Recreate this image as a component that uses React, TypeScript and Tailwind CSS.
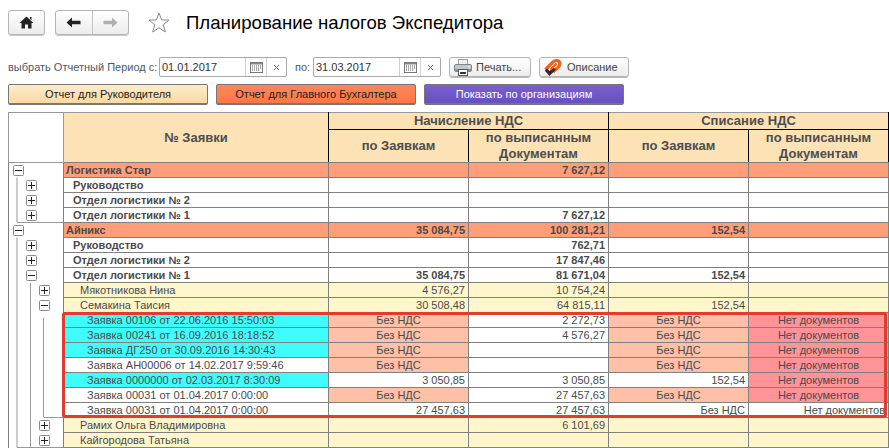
import React from "react";

const Home = () => (
  <svg width="15" height="13" viewBox="0 0 15 13"><path d="M7.5 0.5 L14.5 7 L12.5 7 L12.5 12.5 L9 12.5 L9 8.5 L6 8.5 L6 12.5 L2.5 12.5 L2.5 7 L0.5 7 Z M11 1 h1.5 v3 L11 3 Z" fill="#222" /></svg>
);
const Arrow = ({ dir, color }: { dir: "l" | "r"; color: string }) => (
  <svg width="15" height="11" viewBox="0 0 15 11"><path d={dir === "l" ? "M0.5 5.5 L6 0.5 V3.8 H14.5 V7.2 H6 V10.5 Z" : "M14.5 5.5 L9 0.5 V3.8 H0.5 V7.2 H9 V10.5 Z"} fill={color} /></svg>
);
const Star = () => (
  <svg width="22" height="21" viewBox="0 0 22 21"><path d="M11 1 L13.6 7.9 L21 8.1 L15.2 12.7 L17.3 20 L11 15.8 L4.7 20 L6.8 12.7 L1 8.1 L8.4 7.9 Z" fill="#fff" stroke="#8c8c8c" strokeWidth="1" /></svg>
);
const Cal = () => (
  <svg width="13" height="11" viewBox="0 0 13 11"><rect x="0.5" y="0.5" width="12" height="10" fill="#fff" stroke="#777" /><rect x="1" y="1" width="11" height="1.5" fill="#888" /><path d="M2 4h1M4 4h1M6 4h1M8 4h1M10 4h1M2 6h1M4 6h1M6 6h1M8 6h1M10 6h1M2 8h1M4 8h1M6 8h1M8 8h1" stroke="#555" strokeWidth="1" /></svg>
);
const Cross = () => (
  <svg width="7" height="7" viewBox="0 0 7 7"><path d="M1 1 L6 6 M6 1 L1 6" stroke="#666" strokeWidth="1" /></svg>
);
const Printer = () => (
  <svg width="18" height="17" viewBox="0 0 18 17"><rect x="4.5" y="0.5" width="9" height="6" fill="#eef1f3" stroke="#9aa0a5" /><rect x="0.5" y="5.5" width="17" height="7" rx="1.5" fill="#c3c8cc" stroke="#7f8589" /><rect x="1" y="10" width="16" height="2" fill="#8d9296" /><rect x="4.5" y="10.5" width="9" height="6" fill="#fff" stroke="#55595c" /><rect x="6" y="13" width="6" height="2" fill="#333" /><rect x="14" y="7" width="2" height="1.5" fill="#eee" /></svg>
);
const Clip = () => (
  <svg width="18" height="17" viewBox="0 0 18 17"><path d="M1.5 10.5 L8.5 3.5 C10.5 1.5 13.5 1 15 2.5 C16.7 4.2 15.8 6.5 14 8.3 L9 13" fill="none" stroke="#e8641f" strokeWidth="3.2" /><path d="M2 10.5 L5.5 14.5 L10.5 9.5" fill="none" stroke="#2a2a2a" strokeWidth="3.4" /><path d="M12.5 4.5 L6.5 10.5" stroke="#e8641f" strokeWidth="2.4" /></svg>
);
const TreeBox = ({ open, level }: { open: boolean; level: number }) => {
  const pad = level === 0 ? "pl-[4px]" : level === 1 ? "pl-[17px]" : "pl-[30px]";
  return (
    <div className={`flex items-center ${pad}`}>
      <svg width="11" height="11" viewBox="0 0 11 11" className="relative">
        <rect x="0.5" y="0.5" width="10" height="10" rx="1" fill="#fff" stroke="#8a8a8a" />
        <path d={open ? "M2 5.5h7" : "M2 5.5h7M5.5 2v7"} stroke="#222" strokeWidth="1" />
      </svg>
    </div>
  );
};

type Row = {
  level: number;
  open: boolean;
  label: string;
  cols: [string, string, string, string];
  kind: "org" | "dept" | "person" | "doc";
  nameBg?: string;
  bg?: [string, string, string, string];
  align?: [string, string, string, string];
};

const S = "bg-[#ffc0a8]";
const P = "bg-[#ff9397]";
const W = "bg-white";
const C = "bg-[#3ffdff]";
const bez = "Без НДС";
const net = "Нет документов";
const docAlign: [string, string, string, string] = ["text-center", "text-right", "text-center", "text-center"];

const rows: Row[] = [
  { level: 0, open: true, label: "Логистика Стар", cols: ["", "7 627,12", "", ""], kind: "org" },
  { level: 1, open: false, label: "Руководство", cols: ["", "", "", ""], kind: "dept" },
  { level: 1, open: false, label: "Отдел логистики № 2", cols: ["", "", "", ""], kind: "dept" },
  { level: 1, open: false, label: "Отдел логистики № 1", cols: ["", "7 627,12", "", ""], kind: "dept" },
  { level: 0, open: true, label: "Айникс", cols: ["35 084,75", "100 281,21", "152,54", ""], kind: "org" },
  { level: 1, open: false, label: "Руководство", cols: ["", "762,71", "", ""], kind: "dept" },
  { level: 1, open: false, label: "Отдел логистики № 2", cols: ["", "17 847,46", "", ""], kind: "dept" },
  { level: 1, open: true, label: "Отдел логистики № 1", cols: ["35 084,75", "81 671,04", "152,54", ""], kind: "dept" },
  { level: 2, open: false, label: "Мякотникова Нина", cols: ["4 576,27", "10 754,24", "", ""], kind: "person" },
  { level: 2, open: true, label: "Семакина Таисия", cols: ["30 508,48", "64 815,11", "152,54", ""], kind: "person" },
  { level: 3, open: false, label: "Заявка 00106 от 22.06.2016 15:50:03", cols: [bez, "2 272,73", bez, net], kind: "doc", nameBg: C, bg: [S, W, S, P], align: docAlign },
  { level: 3, open: false, label: "Заявка 00241 от 16.09.2016 18:18:52", cols: [bez, "4 576,27", bez, net], kind: "doc", nameBg: C, bg: [S, W, S, P], align: docAlign },
  { level: 3, open: false, label: "Заявка ДГ250 от 30.09.2016 14:30:43", cols: [bez, "", bez, net], kind: "doc", nameBg: C, bg: [S, W, S, P], align: docAlign },
  { level: 3, open: false, label: "Заявка АН00006 от 14.02.2017 9:59:46", cols: [bez, "", bez, net], kind: "doc", nameBg: W, bg: [S, W, S, P], align: docAlign },
  { level: 3, open: false, label: "Заявка 0000000 от 02.03.2017 8:30:09", cols: ["3 050,85", "3 050,85", "152,54", net], kind: "doc", nameBg: C, bg: [W, W, W, P], align: ["text-right", "text-right", "text-right", "text-center"] },
  { level: 3, open: false, label: "Заявка 00031 от 01.04.2017 0:00:00", cols: [bez, "27 457,63", bez, net], kind: "doc", nameBg: W, bg: [S, W, S, P], align: docAlign },
  { level: 3, open: false, label: "Заявка 00031 от 01.04.2017 0:00:00", cols: ["27 457,63", "27 457,63", bez, net], kind: "doc", nameBg: W, bg: [W, W, W, W], align: ["text-right", "text-right", "text-right", "text-right"] },
  { level: 2, open: false, label: "Рамих Ольга Владимировна", cols: ["", "6 101,69", "", ""], kind: "person" },
  { level: 2, open: false, label: "Кайгородова Татьяна", cols: ["", "", "", ""], kind: "person" },
];

const rowBg = { org: "bg-[#ff9e78]", dept: "bg-white", person: "bg-[#fff6cc]", doc: "bg-white" };
const nameCls = {
  org: "pl-[2px] font-bold",
  dept: "pl-[9px] font-bold",
  person: "pl-[16px]",
  doc: "pl-[23px]",
};

const Th = "bg-[#fde2b5] border border-black text-[#4d4d4d] font-bold text-[13px] leading-[16px] text-center align-middle p-0";

export default function App() {
  return (
    <div className="relative w-[889px] h-[448px] overflow-hidden bg-white font-['Liberation_Sans',Arial,sans-serif]">
      <div className="flex items-center pl-[8px] pt-[10px] h-[35px]">
        <div className="flex items-center justify-center w-[37px] h-[25px] rounded-[3px] border border-[#b4b4b4] bg-gradient-to-b from-white to-[#ececec] shadow-[0_1px_0_#ccc]">
          <Home />
        </div>
        <div className="flex ml-[10px] w-[74px] h-[25px] rounded-[3px] border border-[#b4b4b4] bg-gradient-to-b from-white to-[#ececec] shadow-[0_1px_0_#ccc]">
          <div className="flex-1 flex items-center justify-center border-r border-[#c4c4c4]"><Arrow dir="l" color="#222" /></div>
          <div className="flex-1 flex items-center justify-center"><Arrow dir="r" color="#b0b0b0" /></div>
        </div>
        <div className="ml-[19px] flex"><Star /></div>
        <div className="ml-[16px] text-[18.6px] leading-[24px] text-black whitespace-nowrap">Планирование налогов Экспедитора</div>
      </div>
      <div className="flex items-center pl-[8px] mt-[22px] h-[20px] text-[11px] text-[#4c5a66]">
        <span className="whitespace-nowrap w-[151px]">выбрать Отчетный Период с:</span>
        <div className="flex items-center w-[128px] h-[20px] rounded-[2px] border border-[#a8a8a8] bg-white">
          <span className="w-[85px] pl-[2px] text-[11px] text-[#333]">01.01.2017</span>
          <span className="w-[21px] h-full flex items-center justify-center border-l border-[#d0d0d0]"><Cal /></span>
          <span className="flex-1 h-full flex items-center justify-center border-l border-[#d0d0d0]"><Cross /></span>
        </div>
        <span className="ml-[8px] w-[18px]">по:</span>
        <div className="flex items-center w-[128px] h-[20px] rounded-[2px] border border-[#a8a8a8] bg-white">
          <span className="w-[85px] pl-[2px] text-[11px] text-[#333]">31.03.2017</span>
          <span className="w-[21px] h-full flex items-center justify-center border-l border-[#d0d0d0]"><Cal /></span>
          <span className="flex-1 h-full flex items-center justify-center border-l border-[#d0d0d0]"><Cross /></span>
        </div>
        <div className="ml-[8px] flex items-center w-[82px] h-[20px] rounded-[3px] border border-[#b4b4b4] bg-gradient-to-b from-white to-[#ececec] text-[#444] pl-[4px] gap-[4px] shadow-[0_1px_0_#bbb]">
          <Printer /><span>Печать...</span>
        </div>
        <div className="ml-[8px] flex items-center w-[90px] h-[20px] rounded-[3px] border border-[#b4b4b4] bg-gradient-to-b from-white to-[#ececec] text-[#444] pl-[4px] gap-[5px] shadow-[0_1px_0_#bbb]">
          <Clip /><span>Описание</span>
        </div>
      </div>
      <div className="flex pl-[8px] mt-[7px] h-[21px] gap-[8px] text-[11px]">
        <div className="flex items-center justify-center w-[200px] rounded-[2px] border border-[#777] border-b-2 bg-gradient-to-b from-[#fdeccb] to-[#fbd9a0] text-[#222]">Отчет для Руководителя</div>
        <div className="flex items-center justify-center w-[200px] rounded-[2px] border border-[#777] border-b-2 bg-gradient-to-b from-[#ff8757] to-[#fb7848] text-[#222]">Отчет для Главного Бухгалтера</div>
        <div className="flex items-center justify-center w-[200px] rounded-[2px] border border-[#777] border-b-2 bg-gradient-to-b from-[#7a60d0] to-[#6750c0] text-white">Показать по организациям</div>
      </div>
      <div className="relative ml-[8px] mt-[7px] w-[880px]">
        <table className="table-fixed w-[880px] border-collapse text-[11px] leading-[13px] text-[#4a4a4a]">
          <colgroup>
            <col className="w-[55px]" />
            <col className="w-[265px]" />
            <col className="w-[140px]" />
            <col className="w-[140px]" />
            <col className="w-[140px]" />
            <col className="w-[140px]" />
          </colgroup>
          <thead>
            <tr className="h-[17px]">
              <th rowSpan={2} className="border border-[#999] bg-white p-0" />
              <th rowSpan={2} className={`${Th} border-t-[#999] border-l-[#999] border-b-[#808080]`}>№ Заявки</th>
              <th colSpan={2} className={`${Th} border-t-[#999]`}>Начисление НДС</th>
              <th colSpan={2} className={`${Th} border-t-[#999]`}>Списание НДС</th>
            </tr>
            <tr className="h-[33px]">
              <th className={`${Th} border-b-[#808080]`}>по Заявкам</th>
              <th className={`${Th} border-b-[#808080]`}>по выписанным<br />Документам</th>
              <th className={`${Th} border-b-[#808080]`}>по Заявкам</th>
              <th className={`${Th} border-b-[#808080]`}>по выписанным<br />Документам</th>
            </tr>
          </thead>
          <tbody>
            {rows.map((r, i) => (
              <tr key={i} className="h-[15px]">
                <td className="p-0 border-l border-r border-[#808080] bg-white">
                  {r.level < 3 && <TreeBox open={r.open} level={r.level} />}
                </td>
                <td className={`p-0 border border-[#808080] whitespace-nowrap ${r.nameBg ?? rowBg[r.kind]} ${nameCls[r.kind]}`}>{r.label}</td>
                {r.cols.map((c, j) => (
                  <td key={j} className={`p-0 px-[3px] border border-[#808080] whitespace-nowrap ${r.bg ? r.bg[j] : rowBg[r.kind]} ${r.align ? r.align[j] : "text-right"} ${r.kind === "org" || r.kind === "dept" ? "font-bold" : ""}`}>{c}</td>
                ))}
              </tr>
            ))}
          </tbody>
        </table>
        <svg className="absolute left-0 top-[50px] pointer-events-none" width="56" height="286" viewBox="0 0 56 286">
          <path d="M9 15.5 V60.5 H55 M9 75.5 V285.5 H55 M22.5 121 V285.5 M35.5 156 V255.5 H55" fill="none" stroke="#999" strokeWidth="1" />
        </svg>
        <div className="absolute left-[54px] top-[200px] w-[825px] h-[106px] rounded-[3px] border-[3px] border-[#e53a2e] pointer-events-none" />
      </div>
    </div>
  );
}
